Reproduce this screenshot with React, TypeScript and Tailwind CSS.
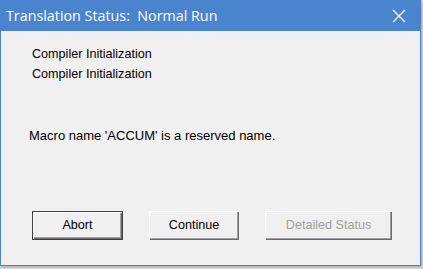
export default function App() {
  return (
    <div className="w-[423px] h-[269px] bg-[#d9d9d9] overflow-hidden">
      <div className="w-[421px] h-[266px] flex flex-col bg-[#f0f0f0] border-l border-r border-b border-[#4a84cf] shadow-[1px_1px_2px_rgba(0,0,0,0.25)]">
        <div className="h-[31px] flex items-center justify-between bg-[#4a84cf] pl-[5px] pr-[14px] text-white">
          <span className="text-[14.3px] font-['Open_Sans',sans-serif] whitespace-pre">
            Translation Status:  Normal Run
          </span>
          <svg width="14" height="14" viewBox="0 0 14 14" className="mt-[1px]">
            <path d="M1 1L13 13M13 1L1 13" stroke="white" strokeWidth="1.3" />
          </svg>
        </div>
        <div className="flex-1 flex flex-col font-['Liberation_Sans',Arial,sans-serif] text-[12.6px] text-black">
          <div className="pl-[31px] pt-[13px] leading-[20px]">
            <div>Compiler Initialization</div>
            <div>Compiler Initialization</div>
          </div>
          <div className="pl-[28px] mt-[42px] leading-[20px] text-[13px]">
            Macro name 'ACCUM' is a reserved name.
          </div>
          <div className="flex pl-[31px] mt-[65px] gap-[26px]">
            <button className="w-[91px] h-[29px] border border-[#404040] bg-[#f0f0f0] shadow-[inset_1px_1px_0_#ffffff,inset_-1px_-1px_0_#696969,inset_-2px_-2px_0_#a0a0a0]">
              Abort
            </button>
            <button className="w-[90px] h-[29px] bg-[#f0f0f0] shadow-[inset_1px_1px_0_#ffffff,inset_-1px_-1px_0_#696969,inset_-2px_-2px_0_#a0a0a0]">
              Continue
            </button>
            <button className="w-[127px] h-[29px] bg-[#f0f0f0] text-[#a0a0a0] shadow-[inset_1px_1px_0_#ffffff,inset_-1px_-1px_0_#696969,inset_-2px_-2px_0_#a0a0a0]">
              Detailed Status
            </button>
          </div>
        </div>
      </div>
    </div>
  )
}
